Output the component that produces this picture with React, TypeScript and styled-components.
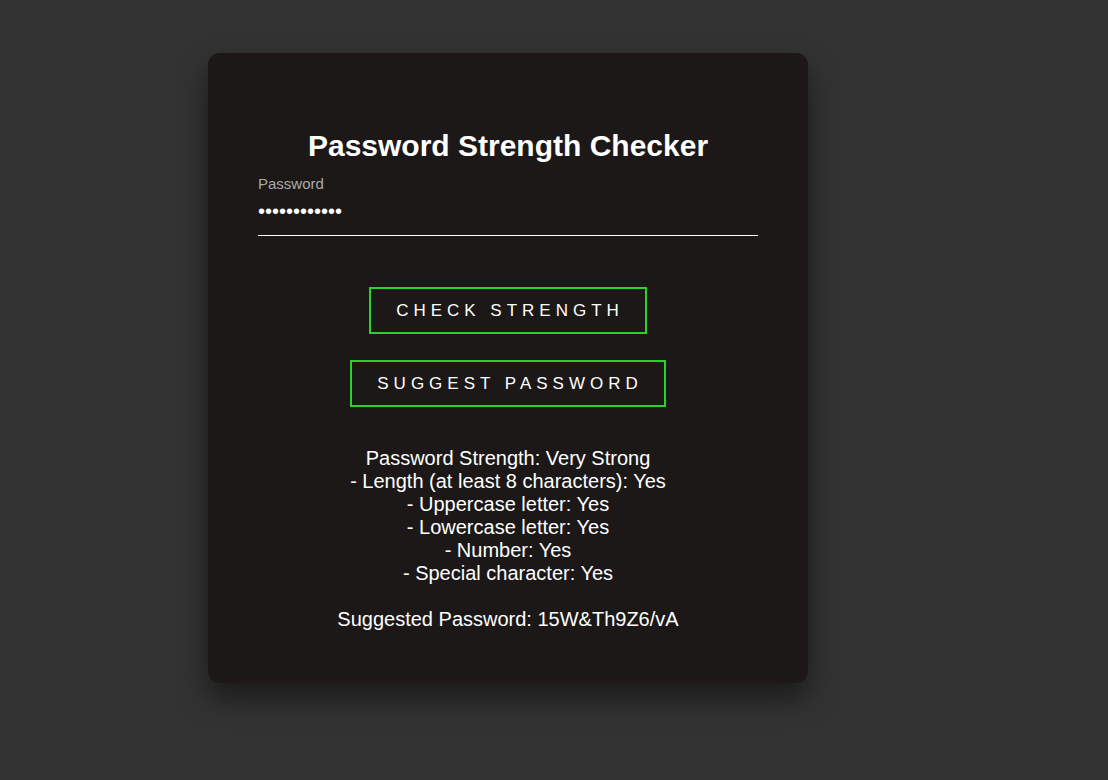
import { useState } from "react";
import styled, { createGlobalStyle } from "styled-components";

const GlobalStyle = createGlobalStyle`
  body {
    margin: 0;
    background: #333333;
    font-family: "Liberation Sans", Arial, sans-serif;
  }
`;

const Page = styled.div`
  display: flex;
  padding: 53px 0 0 208px;
  min-height: 780px;
  box-sizing: border-box;
`;

const Card = styled.div`
  width: 600px;
  height: 630px;
  box-sizing: border-box;
  padding: 76px 50px 50px;
  background: #1b1817;
  border-radius: 12px;
  box-shadow: 0 15px 30px rgba(0, 0, 0, 0.5);
  display: flex;
  flex-direction: column;
  align-items: center;
`;

const Title = styled.h2`
  margin: 0 0 12px;
  font-size: 30px;
  line-height: 34px;
  font-weight: bold;
  color: #ffffff;
  text-align: center;
`;

const Field = styled.div`
  width: 100%;
  display: flex;
  flex-direction: column;
`;

const Label = styled.label`
  font-size: 15px;
  line-height: 17px;
  color: #aaaaaa;
`;

const Input = styled.input`
  margin-top: 5px;
  padding: 3px 0 12px;
  background: transparent;
  border: none;
  border-bottom: 1px solid #ffffff;
  outline: none;
  color: #ffffff;
  font-family: "Liberation Sans", Arial, sans-serif;
  font-size: 20px;
  line-height: 20px;
`;

const Button = styled.button<{ $first?: boolean }>`
  margin-top: ${(p) => (p.$first ? "51px" : "26px")};
  padding: 12px 21px 12px 25px;
  background: transparent;
  border: 2px solid #2bd22b;
  color: #ffffff;
  font-family: "Liberation Sans", Arial, sans-serif;
  font-size: 17px;
  line-height: 19px;
  letter-spacing: 5px;
  text-transform: uppercase;
  cursor: pointer;
`;

const Result = styled.div`
  margin-top: 40px;
  color: #ffffff;
  font-size: 20px;
  line-height: 23px;
  text-align: center;
`;

const Line = styled.div<{ $gap?: boolean }>`
  margin-top: ${(p) => (p.$gap ? "23px" : "0")};
`;

const checks = [
  "Password Strength: Very Strong",
  "- Length (at least 8 characters): Yes",
  "- Uppercase letter: Yes",
  "- Lowercase letter: Yes",
  "- Number: Yes",
  "- Special character: Yes",
];

export default function App() {
  const [password, setPassword] = useState("15W&Th9Z6/vA");

  return (
    <>
      <GlobalStyle />
      <Page>
        <Card>
          <Title>Password Strength Checker</Title>
          <Field>
            <Label htmlFor="pw">Password</Label>
            <Input
              id="pw"
              type="password"
              value={password}
              onChange={(e) => setPassword(e.target.value)}
            />
          </Field>
          <Button $first>Check Strength</Button>
          <Button>Suggest Password</Button>
          <Result>
            {checks.map((c) => (
              <Line key={c}>{c}</Line>
            ))}
            <Line $gap>Suggested Password: 15W&amp;Th9Z6/vA</Line>
          </Result>
        </Card>
      </Page>
    </>
  );
}
